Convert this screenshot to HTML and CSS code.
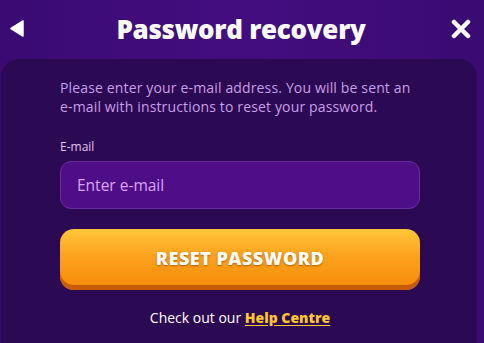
FILE: index.html
```html
<!DOCTYPE html>
<html lang="en">
<head>
<meta charset="utf-8">
<title>Password recovery</title>
<link rel="stylesheet" href="styles.css">
</head>
<body>
<div class="page">
  <header class="header">
    <button class="icon-btn back" aria-label="Back">
      <svg width="14" height="17" viewBox="0 0 14 17"><path d="M13 1 L13 16 L1 8.5 Z" fill="#fff" stroke="#fff" stroke-width="1.5" stroke-linejoin="round"/></svg>
    </button>
    <h1 class="title">Password recovery</h1>
    <button class="icon-btn close" aria-label="Close">
      <svg width="20" height="20" viewBox="0 0 20 20"><path d="M3 3 L17 17 M17 3 L3 17" stroke="#fff" stroke-width="4.5" stroke-linecap="round"/></svg>
    </button>
  </header>
  <main class="panel">
    <p class="intro">Please enter your <span class="nw">e-mail</span> address. You will be sent an <span class="nw">e-mail</span> with instructions to reset your password.</p>
    <label class="label" for="email">E-mail</label>
    <input class="input" id="email" type="email" placeholder="Enter e-mail">
    <button class="reset">RESET PASSWORD</button>
    <p class="help">Check out our <a href="#">Help Centre</a></p>
  </main>
</div>
</body>
</html>
```
FILE: styles.css
```css
* { box-sizing: border-box; }
html, body { margin: 0; padding: 0; }
body {
  width: 484px;
  height: 343px;
  overflow: hidden;
  background: #3d0c78;
  font-family: "Open Sans", sans-serif;
}
.page {
  display: flex;
  flex-direction: column;
  height: 343px;
  background: linear-gradient(90deg, #3a0b72 0%, #430d80 50%, #3a0b72 100%);
}
.header {
  height: 59px;
  display: flex;
  align-items: center;
  justify-content: space-between;
  padding: 0 12px 2px 10px;
}
.icon-btn {
  background: none;
  border: 0;
  padding: 0;
  width: 22px;
  height: 22px;
  display: flex;
  align-items: center;
  justify-content: center;
  cursor: pointer;
}
.back { justify-content: flex-start; }
.title {
  margin: 0;
  color: #fff;
  font-family: "Open Sans", sans-serif;
  font-weight: 800;
  font-size: 26px;
  letter-spacing: -0.3px;
}
.panel {
  flex: 1;
  margin: 0 7px 0 1px;
  background: #2b0953;
  border-radius: 18px 18px 0 0;
  padding: 19px 57px 0 59px;
  display: flex;
  flex-direction: column;
}
.intro {
  margin: 0;
  color: #c89fe8;
  font-size: 14px;
  letter-spacing: 0.15px;
  line-height: 19px;
}
.nw { white-space: nowrap; }
.label {
  margin-top: 24px;
  color: #e1c2f2;
  font-size: 12px;
  line-height: 14px;
}
.input {
  margin-top: 7px;
  height: 48px;
  width: 360px;
  border-radius: 11px;
  background: #4e0e88;
  border: 1px solid #6a2aa2;
  padding: 0 16px;
  font-family: "Open Sans", sans-serif;
  font-size: 15.5px;
  color: #e3b0f5;
  outline: none;
}
.input::placeholder { color: #dca4f2; }
.reset {
  margin-top: 20px;
  height: 61px;
  width: 360px;
  border: 0;
  border-radius: 14px;
  background: linear-gradient(180deg, #ffc53a 0%, #fca21c 45%, #f58a08 100%);
  box-shadow: inset 0 -5px 0 #c75c08;
  color: #fff;
  font-family: "Open Sans", sans-serif;
  font-weight: 800;
  font-size: 18px;
  letter-spacing: 0.5px;
  text-shadow: 0 1px 2px rgba(120, 50, 0, 0.6);
  padding-bottom: 4px;
}
.help {
  margin: 18px 0 0;
  text-align: center;
  color: #fff;
  font-size: 14px;
}
.help a {
  color: #ffc62e;
  font-weight: 800;
  text-decoration: underline;
  text-underline-offset: 2px;
}
```
